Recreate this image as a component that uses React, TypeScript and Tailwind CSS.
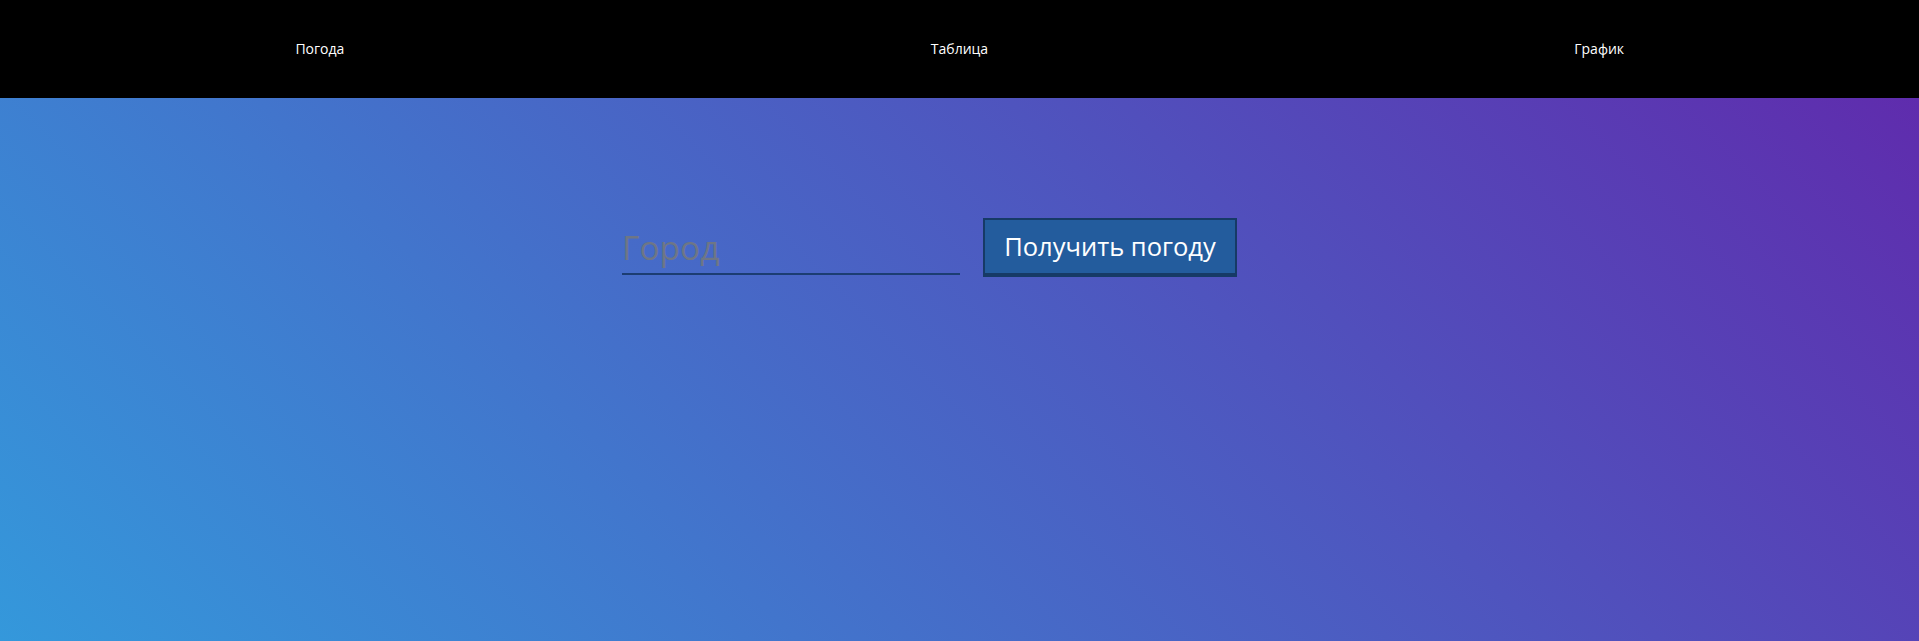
export default function App() {
  return (
    <div className="min-h-[641px] flex flex-col font-['Open_Sans','Noto_Sans',sans-serif]">
      <nav className="h-[98px] pb-[2px] bg-black grid grid-cols-3 items-center text-white text-[14px]">
        <a className="text-center cursor-pointer">Погода</a>
        <a className="text-center cursor-pointer">Таблица</a>
        <a className="text-center cursor-pointer">График</a>
      </nav>
      <main className="flex-1 h-[543px] bg-[linear-gradient(45deg,#3498db,#5f2cad)]">
        <div className="flex justify-center items-start pt-[120px] pr-[60px] gap-[23px]">
          <input
            type="text"
            placeholder="Город"
            className="w-[338px] h-[57px] pt-[2px] bg-transparent outline-none border-b-2 border-[#1c3d72] text-[33.5px] text-white placeholder:text-[#6e7686]"
          />
          <button className="w-[254px] h-[59px] bg-[#235c9d] border-2 border-b-4 border-[#163a66] text-white text-[25.5px]">
            Получить погоду
          </button>
        </div>
      </main>
    </div>
  );
}
